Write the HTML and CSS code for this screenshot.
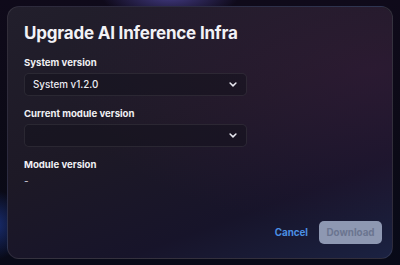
FILE: index.html
```html
<!DOCTYPE html>
<html>
<head>
    <title>Upgrade AI Inference Infra</title>
    <link rel="stylesheet" href="styles.css">
</head>
<body>
    <div class="glow glow-top"></div>
    <div class="glow glow-left"></div>

    <div class="modal">
        <h1>Upgrade AI Inference Infra</h1>

        <div class="field">
            <label>System version</label>
            <div class="select">
                <span>System v1.2.0</span>
                <svg class="chevron" width="8" height="5" viewBox="0 0 8 5">
                    <path d="M1.1 1 L4 3.9 L6.9 1" fill="none" stroke="#e8e8f0" stroke-width="1.5" stroke-linecap="round" stroke-linejoin="round"/>
                </svg>
            </div>
        </div>

        <div class="field">
            <label>Current module version</label>
            <div class="select">
                <span></span>
                <svg class="chevron" width="8" height="5" viewBox="0 0 8 5">
                    <path d="M1.1 1 L4 3.9 L6.9 1" fill="none" stroke="#e8e8f0" stroke-width="1.5" stroke-linecap="round" stroke-linejoin="round"/>
                </svg>
            </div>
        </div>

        <div class="field">
            <label>Module version</label>
            <div class="value">-</div>
        </div>

        <div class="actions">
            <button class="link">Cancel</button>
            <button class="primary" disabled>Download</button>
        </div>
    </div>
</body>
</html>
```

FILE: styles.css
```css
html, body {
    height: 100%;
}

body {
    margin: 0;
    padding: 6px 7px;
    box-sizing: border-box;
    font-family: Inter, "Noto Sans", sans-serif;
    background: linear-gradient(180deg, #0f0a1a 0%, #0b0a16 60%, #080a18 100%);
    color: #f2f2f6;
    overflow: hidden;
    position: relative;
}

.glow {
    position: absolute;
    border-radius: 50%;
    pointer-events: none;
}

.glow-top {
    left: 100px;
    top: -30px;
    width: 140px;
    height: 50px;
    background: radial-gradient(ellipse at center, rgba(110, 100, 220, 0.55), rgba(110, 100, 220, 0) 70%);
}

.glow-left {
    left: -35px;
    top: 190px;
    width: 60px;
    height: 70px;
    background: radial-gradient(ellipse at center, rgba(40, 80, 200, 0.5), rgba(40, 80, 200, 0) 70%);
}

.modal {
    position: relative;
    height: 100%;
    box-sizing: border-box;
    padding: 16px 10px 14px 16px;
    border: 1px solid rgba(255, 255, 255, 0.09);
    border-radius: 12px;
    background: linear-gradient(160deg, #221f2c 0%, #1d1926 45%, #17142a 75%, #1b2242 100%);
    display: flex;
    flex-direction: column;
}

.modal::before {
    content: "";
    position: absolute;
    inset: 0;
    border-radius: 12px;
    background: radial-gradient(ellipse at 95% 25%, rgba(70, 30, 70, 0.35), rgba(70, 30, 70, 0) 60%);
    pointer-events: none;
}

h1 {
    margin: 0 0 13px 0;
    font-size: 17px;
    font-weight: 700;
    line-height: 20px;
    letter-spacing: -0.2px;
    position: relative;
}

.field {
    width: 223px;
    margin-bottom: 11px;
    position: relative;
}

label {
    display: block;
    font-size: 9.6px;
    font-weight: 700;
    line-height: 13px;
    margin-bottom: 4px;
    color: #f0f0f4;
}

.select {
    height: 23px;
    box-sizing: border-box;
    padding: 0 8px;
    border: 1px solid rgba(255, 255, 255, 0.08);
    border-radius: 5px;
    background-color: rgba(20, 18, 30, 0.55);
    display: flex;
    align-items: center;
    justify-content: space-between;
    font-size: 9.8px;
    font-weight: 500;
    color: #ececf2;
}

.chevron {
    margin-right: 1px;
}

.value {
    font-size: 10px;
    line-height: 13px;
    color: #d6d6de;
}

.actions {
    margin-top: auto;
    display: flex;
    justify-content: flex-end;
    align-items: center;
    gap: 11px;
    position: relative;
}

button {
    font-family: Inter, "Noto Sans", sans-serif;
    font-size: 9.8px;
    font-weight: 700;
    border: none;
    cursor: pointer;
}

.link {
    background: none;
    color: #4b8fe3;
    padding: 0;
}

.primary {
    height: 23px;
    width: 63px;
    padding: 0;
    border-radius: 5px;
    background-color: #8e98b2;
    color: #6b7590;
}

.primary:disabled {
    cursor: not-allowed;
}
```
